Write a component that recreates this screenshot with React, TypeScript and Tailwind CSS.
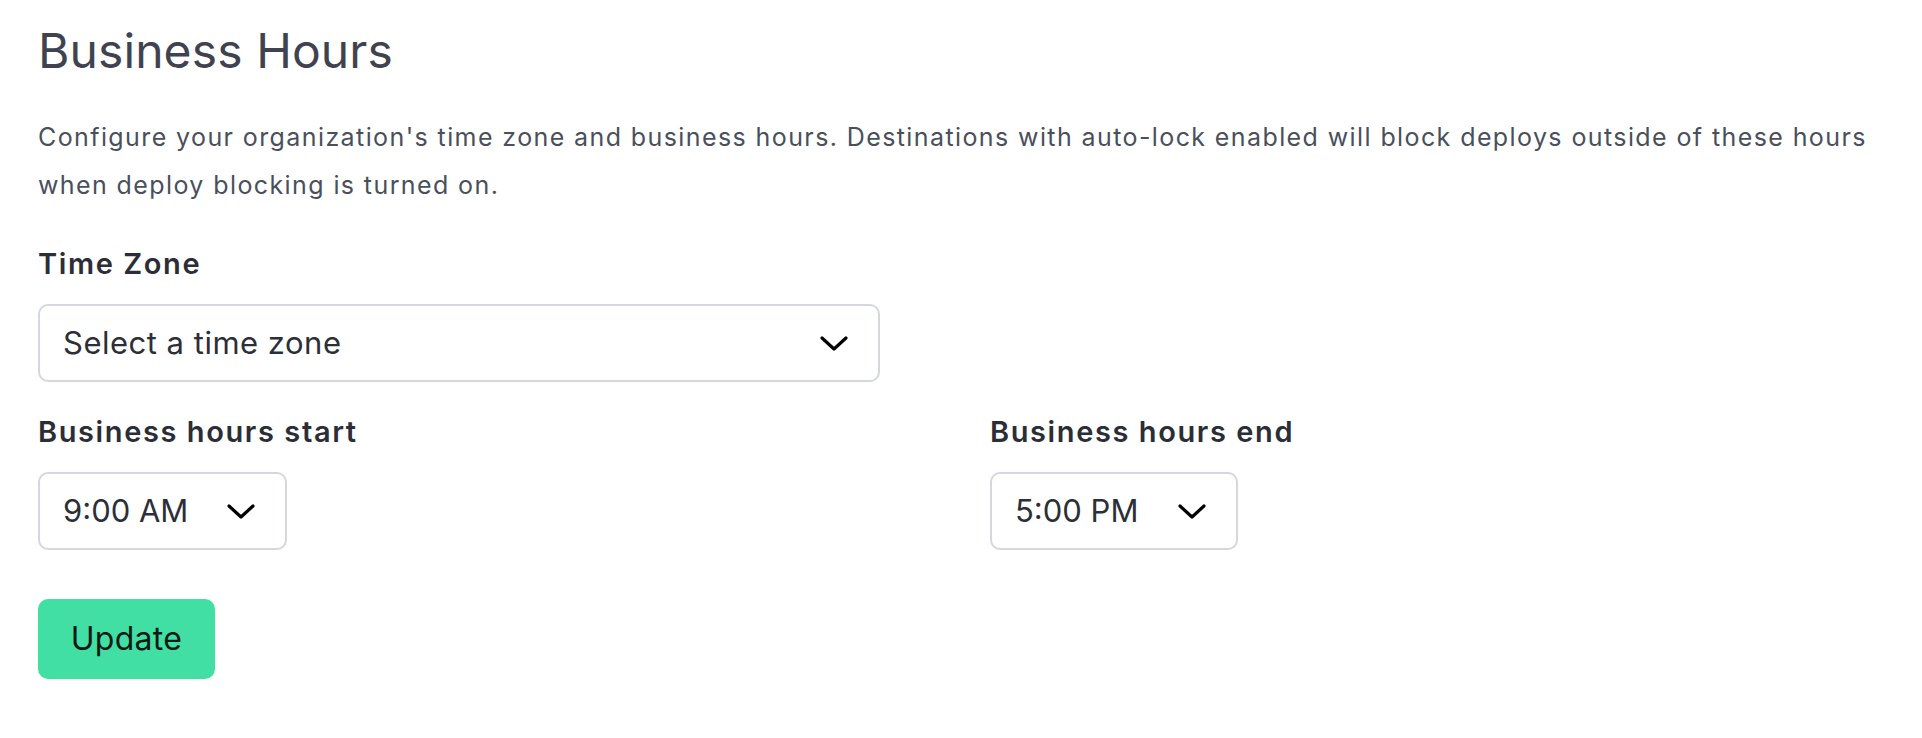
import React from 'react';

/**
 * BusinessHoursSettings — organisation time zone and business hours form.
 */

const TIMES = ['9:00 AM', '5:00 PM'];

function Chevron() {
  return (
    <svg width="28" height="15" viewBox="0 0 28 15" fill="none" className="shrink-0">
      <polyline points="2,2 14,13 26,2" stroke="#000" strokeWidth="3.2" strokeLinecap="round" strokeLinejoin="round" />
    </svg>
  );
}

interface FakeSelectProps {
  value: string;
  className?: string;
}

function FakeSelect({ value, className = '' }: FakeSelectProps) {
  return (
    <button
      type="button"
      className={`flex h-[78px] items-center justify-between rounded-[10px] border-2 border-[#d4d7de] bg-white pl-[23px] pr-[30px] text-left text-[31px] text-[#2c2f37] ${className}`}
    >
      <span>{value}</span>
      <Chevron />
    </button>
  );
}

const LABEL = 'block text-[29px] leading-[40px] font-semibold tracking-[1.6px] text-[#2b2e36]';

export default function App() {
  return (
    <div className="min-h-screen bg-white px-[38px] pt-[22px] font-['Inter',sans-serif]">
      <h1 className="text-[48px] leading-[58px] font-normal tracking-[0.1px] text-[#3f4350]">Business Hours</h1>

      <p className="mt-[33px] text-[25px] leading-[48px] tracking-[1.4px] text-[#4a4f5c]">
        Configure your organization's time zone and business hours. Destinations with auto-lock enabled will block
        deploys outside of these hours when deploy blocking is turned on.
      </p>

      <label className={`mt-[35px] ${LABEL}`}>Time Zone</label>
      <FakeSelect value="Select a time zone" className="mt-[20px] w-[842px] tracking-[0.5px]" />

      <div className="mt-[30px] grid grid-cols-2 gap-x-[58px]">
        <div>
          <label className={LABEL}>Business hours start</label>
          <FakeSelect value={TIMES[0]} className="mt-[20px] w-[249px]" />
        </div>
        <div>
          <label className={LABEL}>Business hours end</label>
          <FakeSelect value={TIMES[1]} className="mt-[20px] w-[248px]" />
        </div>
      </div>

      <button
        type="button"
        className="mt-[49px] h-[80px] w-[177px] rounded-[10px] bg-[#42dfa5] text-[32px] tracking-[0.3px] text-[#0c1a14]"
      >
        Update
      </button>
    </div>
  );
}
